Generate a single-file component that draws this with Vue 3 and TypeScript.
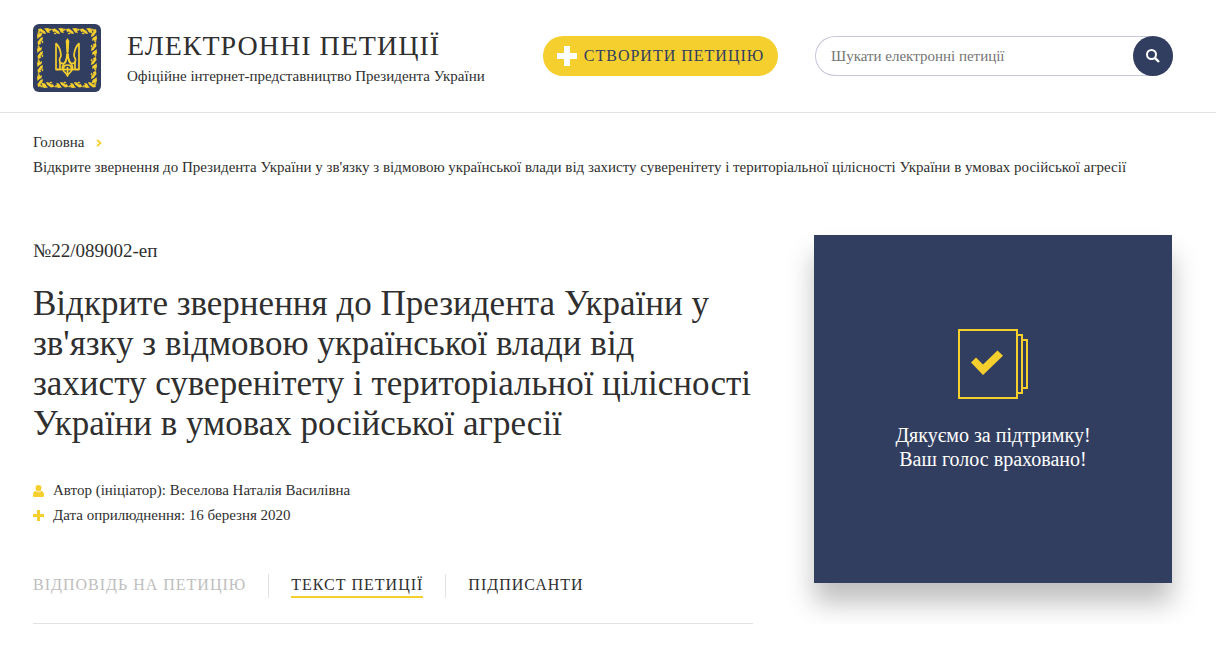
<script setup lang="ts">
import { ref } from 'vue'

interface Tab {
  id: string
  label: string
  disabled: boolean
}

const tabs: Tab[] = [
  { id: 'answer', label: 'Відповідь на петицію', disabled: true },
  { id: 'text', label: 'Текст петиції', disabled: false },
  { id: 'votes', label: 'Підписанти', disabled: false },
]

const activeTab = ref('text')
const query = ref('')
const title =
  "Відкрите звернення до Президента України у зв'язку з відмовою української влади від захисту суверенітету і територіальної цілісності України в умовах російської агресії"

// Leaf ornaments spaced evenly along each side of the emblem frame
const leaves = [0, 1, 2, 3]
const sides = [0, 90, 180, 270]
</script>

<template>
  <header class="header">
    <a class="brand" href="#">
      <svg class="emblem" viewBox="0 0 68 68" aria-hidden="true">
        <rect width="68" height="68" rx="6" fill="#323e5f" />
        <g v-for="side in sides" :key="side" :transform="`rotate(${side} 34 34)`" fill="#f5cf2e">
          <g v-for="leaf in leaves" :key="leaf" :transform="`translate(${5 + leaf * 14} 4)`">
            <path d="M0 1l3-.5 4 3 1 2.500-3-.5-2-2-2 .5z" />
            <path d="M6 .5l4-.5 3 2.500-2 .5 1 2-3-.5-1.500-2.500z" />
            <path d="M1.500 5l2-.5 1 1-1.500 1zM11 0.500l3 .5-1 1.500z" />
          </g>
        </g>
        <g fill="none" stroke="#f5cf2e" stroke-width="1.700" stroke-linejoin="round">
          <path d="M26.500 45.500H23V19.500c3.500 3 4.500 7.500 5 11.500.2 2-1.500 3-1.500 5 0 2.500 1.800 3.700 4 3.500 2.500-.3 3.300-4 3.500-9.500" />
          <path d="M42.500 45.500H46V19.500c-3.500 3-4.500 7.500-5 11.500-.2 2 1.500 3 1.500 5 0 2.500-1.800 3.700-4 3.500-2.500-.3-3.300-4-3.500-9.500" />
          <path d="M23 45.500h23" />
          <path d="M34.500 16v12c0 5.500-1.500 9.500-4 12.500-1.500 2-1 5 .5 7 1.500 1.500 2.800 2.500 3.500 4.500.7-2 2-3 3.500-4.500 1.500-2 2-5 .5-7-2.500-3-4-7-4-12.500" />
          <path d="M27 38v7.500M42 38v7.500M34.500 43v8M30.500 45c0-2.500 1.500-4 4-4s4 1.500 4 4" />
        </g>
        <path d="M34.500 14l1.800 3-.8 11h-2l-.8-11z" fill="#f5cf2e" />
      </svg>
      <span class="brand-text">
        <span class="brand-name">Електронні петиції</span>
        <span class="brand-sub">Офіційне інтернет-представництво Президента України</span>
      </span>
    </a>
    <div class="actions">
      <button class="create" type="button">
        <svg width="20" height="20" viewBox="0 0 20 20" aria-hidden="true">
          <path d="M7 0h6v7h7v6h-7v7H7v-7H0V7h7z" fill="#fff" />
        </svg>
        <span>Створити петицію</span>
      </button>
      <form class="search" role="search" @submit.prevent>
        <input v-model="query" type="search" aria-label="Шукати електронні петиції" placeholder="Шукати електронні петиції" />
        <button type="submit" aria-label="Шукати">
          <svg width="14" height="14" viewBox="0 0 14 14" aria-hidden="true">
            <circle cx="5.500" cy="5.500" r="4.500" fill="none" stroke="#fff" stroke-width="2" />
            <path d="M8.800 8.800L13 13" stroke="#fff" stroke-width="2.400" />
          </svg>
        </button>
      </form>
    </div>
  </header>

  <main class="page">
    <nav class="crumbs" aria-label="Навігація">
      <div class="crumb">
        <a href="#">Головна</a>
        <svg width="6" height="8" viewBox="0 0 6 8" aria-hidden="true">
          <path d="M1 .8L4.500 4 1 7.200" fill="none" stroke="#f5cf2e" stroke-width="1.800" />
        </svg>
      </div>
      <div class="crumb">{{ title }}</div>
    </nav>

    <div class="columns">
      <article>
        <div class="number">№22/089002-еп</div>
        <h1>{{ title }}</h1>
        <ul class="meta">
          <li>
            <svg width="12" height="12" viewBox="0 0 12 12" aria-hidden="true" fill="#f5cf2e">
              <path d="M5.500 0C7.500 0 8.600 1.300 8.500 3S7.500 6.600 5.500 6.600 2.500 4.700 2.500 3 3.500 0 5.500 0z" />
              <path d="M2.500 6L5.500 7.500 8.500 6C10.500 6.500 11 8 11 10.500c0 .8-.4 1.500-1.200 1.500H1.200C.4 12 0 11.300 0 10.500 0 8 .5 6.500 2.500 6z" />
            </svg>
            Автор (ініціатор): Веселова Наталія Василівна
          </li>
          <li>
            <svg width="12" height="12" viewBox="0 0 12 12" aria-hidden="true">
              <path d="M4 0h3v4h4v3H7v4H4V7H0V4h4z" fill="#f5cf2e" />
            </svg>
            Дата оприлюднення: 16 березня 2020
          </li>
        </ul>
        <div class="tabs" role="tablist">
          <div v-for="tab in tabs" :key="tab.id" class="tab-cell">
            <button
              type="button"
              role="tab"
              class="tab"
              :class="{ active: tab.id === activeTab }"
              :aria-selected="tab.id === activeTab"
              :disabled="tab.disabled"
              @click="activeTab = tab.id"
            >
              {{ tab.label }}
            </button>
          </div>
        </div>
      </article>

      <aside class="card">
        <svg width="70" height="70" viewBox="0 0 70 70" aria-hidden="true">
          <g fill="none" stroke="#f5cf2e" stroke-width="2">
            <path d="M1 1h58v68H1zM60 6h4v58h-4M65 11h4v48h-4" />
          </g>
          <path d="M13 33.500l5-5 7 7L39.500 21.500l5.500 5.200L25 46z" fill="#f5cf2e" />
        </svg>
        <p>Дякуємо за підтримку!<br />Ваш голос враховано!</p>
      </aside>
    </div>
  </main>
</template>

<style>
body {
  margin: 0;
  background: #fff;
}
</style>

<style scoped>
.header,
.page {
  font-family: "Liberation Serif", "Times New Roman", serif;
  font-size: 15px;
  color: #2f2f2f;
}

.header {
  display: flex;
  align-items: flex-start;
  justify-content: space-between;
  padding: 24px 43px 20px 33px;
  border-bottom: 1px solid #e2e2e2;
}

.brand {
  display: flex;
  gap: 26px;
  color: inherit;
  text-decoration: none;
  white-space: nowrap;
}

.emblem {
  flex: none;
  width: 68px;
  height: 68px;
}

.brand-text {
  display: flex;
  flex-direction: column;
}

.brand-name {
  margin-top: 4px;
  font-size: 28px;
  line-height: 36px;
  letter-spacing: 1px;
  text-transform: uppercase;
}

.brand-sub {
  line-height: 24px;
}

.actions {
  display: flex;
  gap: 37px;
  padding-top: 12px;
}

button {
  padding: 0;
  border: 0;
  font: inherit;
  color: inherit;
  background: none;
  cursor: pointer;
}

.create {
  display: flex;
  align-items: center;
  justify-content: center;
  gap: 7px;
  width: 235px;
  height: 40px;
  border-radius: 20px;
  background: #f5cf2e;
  color: #323e5f;
  font-size: 16px;
  letter-spacing: 1px;
  text-transform: uppercase;
  white-space: nowrap;
}

.search {
  box-sizing: border-box;
  display: flex;
  width: 358px;
  height: 40px;
  border-radius: 20px;
  box-shadow: inset 0 0 0 1px #c8c6db;
}

.search input {
  flex: 1;
  min-width: 0;
  padding: 0 0 0 16px;
  border: 0;
  outline: 0;
  background: none;
  font: inherit;
}

.search input::placeholder {
  color: #757575;
}

.search button {
  display: grid;
  place-items: center;
  width: 40px;
  height: 40px;
  border-radius: 50%;
  background: #323e5f;
}

.page {
  padding: 17px 44px 0 33px;
}

.crumb {
  display: flex;
  align-items: center;
  gap: 12px;
  line-height: 25px;
}

.crumb a {
  color: inherit;
  text-decoration: none;
}

.columns {
  display: grid;
  grid-template-columns: minmax(0, 1fr) 358px;
  align-items: start;
  gap: 61px;
  margin-top: 55px;
}

.number {
  padding-top: 4px;
  font-size: 19px;
  line-height: 24px;
}

h1 {
  margin: 21px 0 0;
  font-size: 35px;
  font-weight: 400;
  line-height: 40px;
}

.meta {
  margin: 34px 0 0;
  padding: 0;
  list-style: none;
  line-height: 25px;
}

.meta li {
  display: flex;
  align-items: center;
  gap: 8px;
}

.tabs {
  display: flex;
  margin-top: 46px;
  padding-bottom: 25px;
  border-bottom: 1px solid #e2e2e2;
}

.tab-cell {
  height: 24px;
}

.tab-cell + .tab-cell {
  margin-left: 22px;
  padding-left: 22px;
  border-left: 1px solid #e2e2e2;
}

.tab {
  height: 24px;
  border-bottom: 2px solid transparent;
  font-size: 16px;
  line-height: 22px;
  letter-spacing: 1px;
  text-transform: uppercase;
  white-space: nowrap;
}

.tab.active {
  border-color: #f5cf2e;
}

.tab:disabled {
  color: #bebebe;
  cursor: default;
}

.card {
  box-sizing: border-box;
  display: flex;
  flex-direction: column;
  align-items: center;
  justify-content: center;
  gap: 24px;
  min-height: 348px;
  padding-bottom: 18px;
  background: #323e5f;
  color: #fff;
  box-shadow: 0 20px 25px rgba(0, 0, 0, 0.25);
}

.card p {
  margin: 0;
  font-size: 20px;
  line-height: 24px;
  text-align: center;
}
</style>
